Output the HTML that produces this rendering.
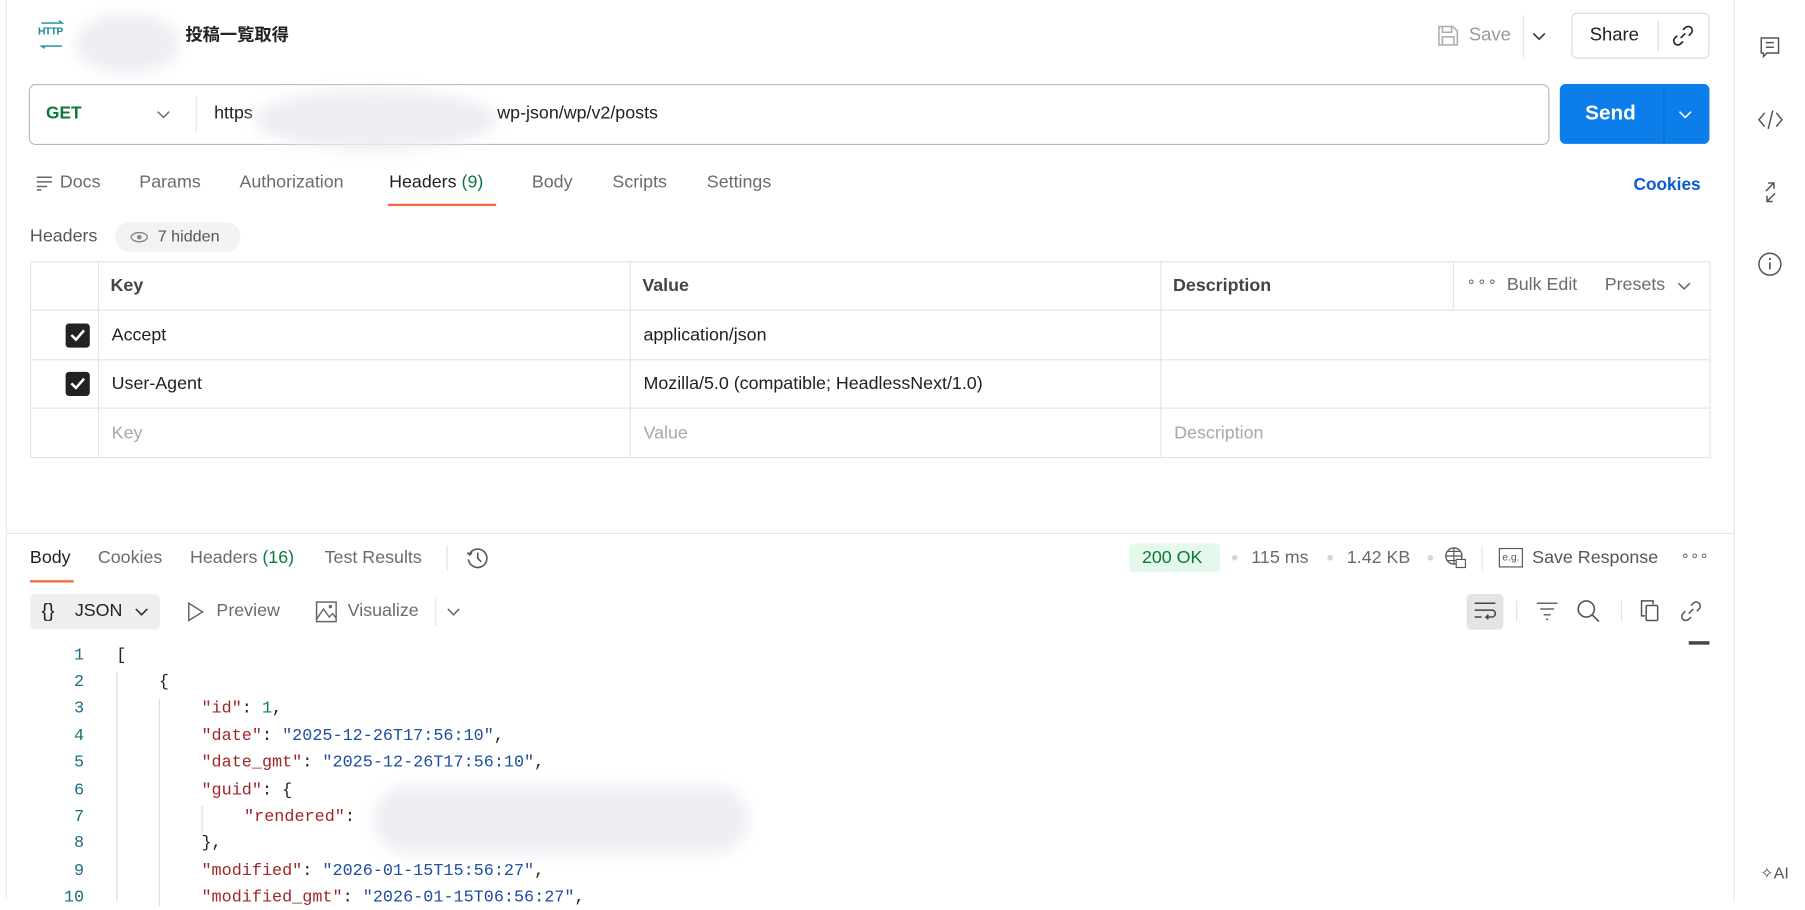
<!DOCTYPE html>
<html><head><meta charset="utf-8">
<style>
*{box-sizing:border-box;margin:0;padding:0}
html,body{width:1805px;height:900px;overflow:hidden;background:#fff}
#w{position:absolute;left:0;top:0;width:1568px;height:782px;transform:scale(1.15115);transform-origin:0 0;font-family:"Liberation Sans","Noto Sans CJK JP",sans-serif;color:#212121;font-size:15.5px;line-height:1.4}
.a{position:absolute;white-space:nowrap}
.g{color:#6b6b6b}
.blob{position:absolute;background:#eceef3;border-radius:50%;filter:blur(6px)}
svg{position:absolute;overflow:visible}
.code{font-family:"Liberation Mono",monospace;font-size:14.6px}
.k{color:#a0262a}.s{color:#1f4fa0}.n{color:#0a7a6a}
.ln{position:absolute;width:30px;text-align:right;left:43px;color:#1d6a82;font-family:"Liberation Mono",monospace;font-size:14.6px}
</style></head><body><div id="w">
<div class="a" style="left:5px;top:0;width:1px;height:782px;background:#ececec"></div>
<div class="a" style="left:1506px;top:0;width:1px;height:782px;background:#e6e6e6"></div>

<!-- header -->
<div class="a" style="left:33px;top:22px;font-size:9px;color:#1a8a99;font-weight:bold;letter-spacing:-0.5px;line-height:1.2">HTTP</div>
<svg style="left:33px;top:18px" width="24" height="26"><path d="M3 2h18l-3-2M21 22H3l3 2" stroke="#1a8a99" stroke-width="1.2" fill="none"/></svg>
<div class="blob" style="left:66px;top:12px;width:90px;height:52px"></div>
<div class="a" style="left:161px;top:20px;font-size:15px;font-weight:bold;color:#222">投稿一覧取得</div>
<svg style="left:1249px;top:22px" width="18" height="18"><path d="M1 1h12l4 4v12H1z M4 1v5h8V1 M4 17v-7h10v7" stroke="#aaa" stroke-width="1.3" fill="none"/></svg>
<div class="a" style="left:1276px;top:20px;color:#9a9a9a;font-size:16px">Save</div>
<div class="a" style="left:1323px;top:13px;width:1px;height:38px;background:#e3e3e3"></div>
<svg style="left:1331px;top:28px" width="12" height="8"><path d="M1 1l5 5 5-5" stroke="#333" stroke-width="1.4" fill="none"/></svg>
<div class="a" style="left:1365px;top:11px;width:120px;height:40px;border:1px solid #dcdcdc;border-radius:5px"></div>
<div class="a" style="left:1381px;top:20px;font-size:16px;color:#222">Share</div>
<div class="a" style="left:1440px;top:18px;width:1px;height:26px;background:#dcdcdc"></div>
<svg style="left:1453px;top:22px" width="18" height="18"><path d="M7 11l4-4 M9 4l2-2a3 3 0 0 1 5 5l-2 2 M9 14l-2 2a3 3 0 0 1-5-5l2-2" stroke="#222" stroke-width="1.4" fill="none"/></svg>

<!-- url bar -->
<div class="a" style="left:25px;top:73px;width:1321px;height:53px;border:1px solid #b8b8b8;border-radius:6px"></div>
<div class="a" style="left:40px;top:88px;font-weight:bold;color:#0a7a3a;font-size:15px">GET</div>
<svg style="left:136px;top:96px" width="12" height="7"><path d="M1 1l5 5 5-5" stroke="#666" stroke-width="1.2" fill="none"/></svg>
<div class="a" style="left:170px;top:84px;width:1px;height:31px;background:#e3e3e3"></div>
<div class="a" style="left:186px;top:88px">https</div>
<div class="blob" style="left:220px;top:78px;width:212px;height:52px"></div>
<div class="a" style="left:432px;top:88px">wp-json/wp/v2/posts</div>
<div class="a" style="left:1355px;top:73px;width:130px;height:52px;background:#0b7eea;border-radius:5px"></div>
<div class="a" style="left:1445px;top:73px;width:1px;height:52px;background:#0a6fd0"></div>
<div class="a" style="left:1377px;top:86px;font-size:18px;font-weight:bold;color:#fff">Send</div>
<svg style="left:1458px;top:96px" width="12" height="7"><path d="M1 1l5 5 5-5" stroke="#fff" stroke-width="1.3" fill="none"/></svg>

<!-- tabs -->
<svg style="left:32px;top:153px" width="14" height="12"><path d="M0 1h13M0 5h13M0 9h9M0 12h4" stroke="#666" stroke-width="1.3"/></svg>
<div class="a g" style="left:52px;top:148px">Docs</div>
<div class="a g" style="left:121px;top:148px">Params</div>
<div class="a g" style="left:208px;top:148px">Authorization</div>
<div class="a" style="left:338px;top:148px">Headers <span style="color:#0a7a3a">(9)</span></div>
<div class="a" style="left:337px;top:177px;width:94px;height:2px;background:#f26b3a"></div>
<div class="a g" style="left:462px;top:148px">Body</div>
<div class="a g" style="left:532px;top:148px">Scripts</div>
<div class="a g" style="left:614px;top:148px">Settings</div>
<div class="a" style="left:1419px;top:150px;font-weight:bold;color:#0b5bd0;font-size:15px">Cookies</div>

<div class="a" style="left:26px;top:195px;color:#555">Headers</div>
<div class="a" style="left:100px;top:193px;width:109px;height:26px;background:#f3f3f3;border-radius:13px"></div>
<svg style="left:113px;top:201px" width="16" height="10"><ellipse cx="8" cy="5" rx="7" ry="4" stroke="#888" stroke-width="1.2" fill="none"/><circle cx="8" cy="5" r="2" fill="#888"/></svg>
<div class="a" style="left:137px;top:196px;color:#555;font-size:14px">7 hidden</div>

<!-- table -->
<div class="a" style="left:26px;top:227px;width:1460px;height:171px;border:1px solid #e3e3e3"></div>
<div class="a" style="left:26px;top:269px;width:1460px;height:1px;background:#e3e3e3"></div>
<div class="a" style="left:26px;top:312px;width:1460px;height:1px;background:#e3e3e3"></div>
<div class="a" style="left:26px;top:354px;width:1460px;height:1px;background:#e3e3e3"></div>
<div class="a" style="left:85px;top:227px;width:1px;height:171px;background:#e3e3e3"></div>
<div class="a" style="left:547px;top:227px;width:1px;height:171px;background:#e3e3e3"></div>
<div class="a" style="left:1008px;top:227px;width:1px;height:171px;background:#e3e3e3"></div>
<div class="a" style="left:1262px;top:227px;width:1px;height:43px;background:#e3e3e3"></div>
<div class="a" style="left:96px;top:238px;font-weight:bold;color:#444">Key</div>
<div class="a" style="left:558px;top:238px;font-weight:bold;color:#444">Value</div>
<div class="a" style="left:1019px;top:238px;font-weight:bold;color:#444">Description</div>
<div class="a g" style="left:1274px;top:236px;letter-spacing:1px;font-size:13px">∘∘∘</div>
<div class="a g" style="left:1309px;top:237px">Bulk Edit</div>
<div class="a g" style="left:1394px;top:237px">Presets</div>
<svg style="left:1457px;top:245px" width="12" height="7"><path d="M1 1l5 5 5-5" stroke="#666" stroke-width="1.3" fill="none"/></svg>
<div class="a" style="left:57px;top:281px;width:21px;height:21px;background:#222;border-radius:3px"></div>
<svg style="left:60px;top:285px" width="15" height="13"><path d="M2 6l4 4 7-8" stroke="#fff" stroke-width="2.2" fill="none"/></svg>
<div class="a" style="left:57px;top:323px;width:21px;height:21px;background:#222;border-radius:3px"></div>
<svg style="left:60px;top:327px" width="15" height="13"><path d="M2 6l4 4 7-8" stroke="#fff" stroke-width="2.2" fill="none"/></svg>
<div class="a" style="left:97px;top:281px">Accept</div>
<div class="a" style="left:559px;top:281px">application/json</div>
<div class="a" style="left:97px;top:323px">User-Agent</div>
<div class="a" style="left:559px;top:323px">Mozilla/5.0 (compatible; HeadlessNext/1.0)</div>
<div class="a" style="left:97px;top:366px;color:#a8a8a8">Key</div>
<div class="a" style="left:559px;top:366px;color:#a8a8a8">Value</div>
<div class="a" style="left:1020px;top:366px;color:#a8a8a8">Description</div>

<div class="a" style="left:5px;top:463px;width:1501px;height:1px;background:#e6e6e6"></div>

<!-- response tabs -->
<div class="a" style="left:26px;top:474px">Body</div>
<div class="a" style="left:26px;top:504px;width:38px;height:2px;background:#f26b3a"></div>
<div class="a g" style="left:85px;top:474px">Cookies</div>
<div class="a g" style="left:165px;top:474px">Headers <span style="color:#0a7a3a">(16)</span></div>
<div class="a g" style="left:282px;top:474px">Test Results</div>
<div class="a" style="left:388px;top:474px;width:1px;height:22px;background:#e3e3e3"></div>
<svg style="left:404px;top:474px" width="22" height="22"><path d="M4 7a8 8 0 1 1-1 5M2 6l2 2 2-2 M11 6v5l3 3" stroke="#555" stroke-width="1.4" fill="none"/></svg>
<div class="a" style="left:981px;top:472px;width:79px;height:25px;background:#e4f8ec;border-radius:4px"></div>
<div class="a" style="left:992px;top:474px;color:#0a7a3a">200 OK</div>
<div class="a" style="left:1070px;top:482px;width:5px;height:5px;border-radius:50%;background:#d6d6d6"></div>
<div class="a g" style="left:1087px;top:474px">115 ms</div>
<div class="a" style="left:1153px;top:482px;width:5px;height:5px;border-radius:50%;background:#d6d6d6"></div>
<div class="a g" style="left:1170px;top:474px">1.42 KB</div>
<div class="a" style="left:1240px;top:482px;width:5px;height:5px;border-radius:50%;background:#d6d6d6"></div>
<svg style="left:1255px;top:475px" width="20" height="20"><circle cx="8" cy="8" r="7" stroke="#555" stroke-width="1.2" fill="none"/><path d="M1 8h14M8 1v14M3 4h10M3 12h10" stroke="#555" stroke-width="1"/><rect x="10" y="11" width="8" height="7" fill="#fff" stroke="#555"/></svg>
<div class="a" style="left:1287px;top:474px;width:1px;height:22px;background:#e3e3e3"></div>
<div class="a" style="left:1302px;top:476px;width:21px;height:17px;border:1.3px solid #555;font-size:9px;color:#555;text-align:center;line-height:14px">e.g.</div>
<div class="a g" style="left:1331px;top:474px;color:#555">Save Response</div>
<div class="a g" style="left:1460px;top:474px;font-size:13px">∘∘∘</div>

<!-- json row -->
<div class="a" style="left:26px;top:516px;width:113px;height:31px;background:#efefef;border-radius:4px"></div>
<div class="a" style="left:36px;top:519px;font-size:17px">{}</div>
<div class="a" style="left:65px;top:520px">JSON</div>
<svg style="left:117px;top:528px" width="12" height="7"><path d="M1 1l5 5 5-5" stroke="#333" stroke-width="1.4" fill="none"/></svg>
<svg style="left:163px;top:523px" width="14" height="17"><path d="M1 1l12 7.5L1 16z" stroke="#666" stroke-width="1.3" fill="none"/></svg>
<div class="a g" style="left:188px;top:520px">Preview</div>
<svg style="left:274px;top:522px" width="19" height="19"><rect x="1" y="1" width="17" height="17" stroke="#666" stroke-width="1.3" fill="none"/><path d="M1 16l6-9 5 7 3-3 3 4" stroke="#666" stroke-width="1.2" fill="none"/><circle cx="13" cy="5" r="1.5" fill="#666"/></svg>
<div class="a g" style="left:302px;top:520px">Visualize</div>
<div class="a" style="left:378px;top:519px;width:1px;height:25px;background:#e3e3e3"></div>
<svg style="left:388px;top:528px" width="12" height="7"><path d="M1 1l5 5 5-5" stroke="#666" stroke-width="1.3" fill="none"/></svg>

<div class="a" style="left:1274px;top:516px;width:32px;height:31px;background:#e4e4e4;border-radius:4px"></div>
<svg style="left:1280px;top:523px" width="20" height="16"><path d="M1 1h18M1 7h15a3 3 0 0 1 0 6h-5l2-2m-2 2l2 2M1 13h6" stroke="#444" stroke-width="1.3" fill="none"/></svg>
<div class="a" style="left:1317px;top:522px;width:1px;height:18px;background:#e3e3e3"></div>
<svg style="left:1334px;top:523px" width="20" height="16"><path d="M1 1h18M4 6h12M7 11h6M9 15h2" stroke="#666" stroke-width="1.3"/></svg>
<svg style="left:1370px;top:521px" width="22" height="22"><circle cx="8" cy="8" r="7" stroke="#555" stroke-width="1.4" fill="none"/><path d="M13 13l6 6" stroke="#555" stroke-width="1.4"/></svg>
<div class="a" style="left:1408px;top:522px;width:1px;height:18px;background:#e3e3e3"></div>
<svg style="left:1424px;top:521px" width="20" height="20"><path d="M5 14H2V1h10v3" stroke="#555" stroke-width="1.3" fill="none"/><rect x="6" y="5" width="10" height="13" rx="1" stroke="#555" stroke-width="1.3" fill="none"/></svg>
<svg style="left:1460px;top:522px" width="18" height="18"><path d="M7 11l4-4 M9 4l2-2a3 3 0 0 1 5 5l-2 2 M9 14l-2 2a3 3 0 0 1-5-5l2-2" stroke="#555" stroke-width="1.3" fill="none"/></svg>
<div class="a" style="left:1467px;top:557px;width:18px;height:3px;background:#444"></div>

<!-- code -->
<div class="a" style="left:101px;top:583px;width:1px;height:200px;background:#ddd"></div>
<div class="a" style="left:138px;top:607px;width:1px;height:180px;background:#ddd"></div>
<div class="a" style="left:175px;top:700px;width:1px;height:24px;background:#ddd"></div>
<div class="ln" style="top:560px">1</div>
<div class="ln" style="top:583px">2</div>
<div class="ln" style="top:606px">3</div>
<div class="ln" style="top:630px">4</div>
<div class="ln" style="top:653px">5</div>
<div class="ln" style="top:677px">6</div>
<div class="ln" style="top:700px">7</div>
<div class="ln" style="top:723px">8</div>
<div class="ln" style="top:747px">9</div>
<div class="ln" style="top:770px">10</div>
<div class="a code" style="left:101px;top:560px">[</div>
<div class="a code" style="left:138px;top:583px">{</div>
<div class="a code" style="left:175px;top:606px"><span class="k">"id"</span>: <span class="n">1</span>,</div>
<div class="a code" style="left:175px;top:630px"><span class="k">"date"</span>: <span class="s">"2025-12-26T17:56:10"</span>,</div>
<div class="a code" style="left:175px;top:653px"><span class="k">"date_gmt"</span>: <span class="s">"2025-12-26T17:56:10"</span>,</div>
<div class="a code" style="left:175px;top:677px"><span class="k">"guid"</span>: {</div>
<div class="a code" style="left:212px;top:700px"><span class="k">"rendered"</span>:</div>
<div class="a code" style="left:175px;top:723px">},</div>
<div class="a code" style="left:175px;top:747px"><span class="k">"modified"</span>: <span class="s">"2026-01-15T15:56:27"</span>,</div>
<div class="a code" style="left:175px;top:770px"><span class="k">"modified_gmt"</span>: <span class="s">"2026-01-15T06:56:27"</span>,</div>
<div class="blob" style="left:325px;top:683px;width:325px;height:58px;border-radius:30px"></div>

<!-- sidebar icons -->
<svg style="left:1528px;top:32px" width="20" height="20"><path d="M2 1h15v13H7l-3 3v-3H2z M6 5h7M6 9h7" stroke="#555" stroke-width="1.3" fill="none"/></svg>
<svg style="left:1527px;top:95px" width="22" height="18"><path d="M6 3L1 9l5 6M16 3l5 6-5 6M13 1L9 17" stroke="#555" stroke-width="1.3" fill="none"/></svg>
<svg style="left:1530px;top:158px" width="16" height="18"><path d="M6 1h5v5M11 1L4 8M10 17H5v-5M5 17l7-7" stroke="#555" stroke-width="1.3" fill="none"/></svg>
<svg style="left:1527px;top:219px" width="21" height="21"><circle cx="10.5" cy="10.5" r="9.5" stroke="#555" stroke-width="1.3" fill="none"/><path d="M10.5 9v6" stroke="#555" stroke-width="1.5"/><circle cx="10.5" cy="6" r="1" fill="#555"/></svg>
<div class="a" style="left:1529px;top:749px;font-size:14px;color:#555">✧AI</div>
</div></body></html>
